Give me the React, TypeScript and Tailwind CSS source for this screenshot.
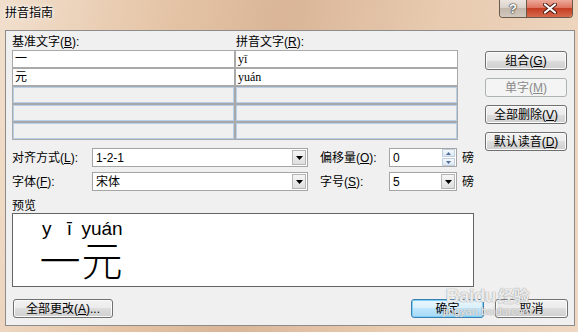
import React from "react";

const Key = ({ k }: { k: string }) => (
  <>
    (<span className="underline underline-offset-1">{k}</span>)
  </>
);

interface WinButtonProps {
  children: React.ReactNode;
  className?: string;
  disabled?: boolean;
  primary?: boolean;
}

const WinButton: React.FC<WinButtonProps> = ({
  children,
  className = "",
  disabled = false,
  primary = false,
}) => {
  const look = disabled
    ? "border-[#adb2b5] bg-[#f4f4f4] text-[#8a8a8a]"
    : primary
    ? "border-[#3c7fb1] bg-[linear-gradient(#eaf6fd,#d9f0fc_50%,#bee6fd_50%,#a7d9f5)] shadow-[inset_0_0_0_1px_#7fd0f7] text-black"
    : "border-[#707070] bg-[linear-gradient(#f2f2f2,#ebebeb_50%,#dddddd_50%,#cfcfcf)] shadow-[inset_0_0_0_1px_#fbfbfb] text-black";
  return (
    <div
      className={`flex h-[19px] items-center justify-center rounded-[3px] border text-[12px] leading-none ${look} ${className}`}
    >
      {children}
    </div>
  );
};

const DropArrow = () => (
  <svg width="7" height="4" viewBox="0 0 7 4">
    <path d="M0 0h7L3.5 4z" fill="#000" />
  </svg>
);

const ComboBox = ({ value, width }: { value: string; width: string }) => (
  <div className={`flex h-[19px] items-center border border-[#a5a5a5] bg-white ${width}`}>
    <span className="flex-1 pl-[3px] text-[12px] leading-none">{value}</span>
    <div className="mr-px flex h-[15px] w-[14px] items-center justify-center border border-[#b5b5b5] bg-[linear-gradient(#f6f6f6,#dedede)]">
      <DropArrow />
    </div>
  </div>
);

const SpinBox = ({ value }: { value: string }) => (
  <div className="flex h-[19px] w-[68px] items-center border border-[#a5a5a5] bg-white">
    <span className="flex-1 pl-[3px] text-[12px] leading-none">{value}</span>
    <div className="mr-px flex h-[17px] w-[13px] flex-col">
      <div className="flex h-[8px] items-center justify-center border border-[#c2cfdf] bg-[linear-gradient(#f4f8fc,#dce7f3)]">
        <svg width="5" height="3" viewBox="0 0 5 3">
          <path d="M0 3h5L2.5 0z" fill="#4d6d99" />
        </svg>
      </div>
      <div className="mt-px flex h-[8px] items-center justify-center border border-[#c2cfdf] bg-[linear-gradient(#f4f8fc,#dce7f3)]">
        <svg width="5" height="3" viewBox="0 0 5 3">
          <path d="M0 0h5L2.5 3z" fill="#4d6d99" />
        </svg>
      </div>
    </div>
  </div>
);

const rows = [
  { base: "一", ruby: "yī" },
  { base: "元", ruby: "yuán" },
  null,
  null,
  null,
];

export default function App() {
  return (
    <div className="relative flex h-[332px] w-[578px] flex-col overflow-hidden bg-[linear-gradient(100deg,#f1dfcd_0%,#e6c6a8_25%,#dab597_45%,#e8cbb0_70%,#efd8c3_100%)] pl-[5px] pr-[3px] pb-[6px] font-['Liberation_Sans','Noto_Sans_CJK_SC',sans-serif] text-black">
      {/* title bar */}
      <div className="flex h-[30px] shrink-0 items-start justify-between">
        <span className="pt-[6px] text-[12px] leading-[14px] [text-shadow:0_0_6px_#fff,0_0_3px_#fff]">
          拼音指南
        </span>
        <div className="mr-[2px] flex h-[18px] overflow-hidden rounded-b-[4px] border border-t-0 border-[#6a5a4c]">
          <div className="flex w-[27px] items-center justify-center border-r border-[#6a5a4c] bg-[linear-gradient(#ece6e0,#d9d0c8_50%,#c4b8ad_50%,#d2c8be)]">
            <span className="text-[13px] font-bold leading-none text-white [text-shadow:0_0_1px_#333,0_0_1px_#333,0_0_2px_#333]">
              ?
            </span>
          </div>
          <div className="flex w-[45px] items-center justify-center bg-[linear-gradient(#eeaa9a,#dc6e58_50%,#c53d22_50%,#d6694c)]">
            <svg width="14" height="11" viewBox="0 0 14 11">
              <path d="M2 1.5l10 8M12 1.5l-10 8" stroke="#4a2018" strokeWidth="4" strokeLinecap="round" />
              <path d="M2 1.5l10 8M12 1.5l-10 8" stroke="#fff" strokeWidth="2.2" strokeLinecap="round" />
            </svg>
          </div>
        </div>
      </div>

      {/* client area */}
      <div className="flex flex-1 flex-col border border-[#8c8c8c] bg-[#f0f0f0] pl-[6px] pr-[6px] pb-[7px] text-[12px]">
        <div className="flex">
          {/* left column */}
          <div className="flex w-[462px] flex-col pt-[3px]">
            <div className="grid h-[16px] w-[446px] grid-cols-2 leading-[16px]">
              <span>
                基准文字<Key k="B" />:
              </span>
              <span className="pl-[1px]">
                拼音文字<Key k="R" />:
              </span>
            </div>
            <div className="grid w-[446px] grid-cols-2 gap-[2px] bg-[#a9a9a9] p-px">
              {rows.map((r, i) =>
                r ? (
                  <React.Fragment key={i}>
                    <div className="h-[16px] bg-white pl-[2px] leading-[16px]">{r.base}</div>
                    <div className="h-[16px] bg-white pl-[2px] font-['Liberation_Serif',serif] text-[12px] leading-[16px]">
                      {r.ruby}
                    </div>
                  </React.Fragment>
                ) : (
                  <React.Fragment key={i}>
                    <div className="h-[16px] border border-[#b7cfe9] bg-[#f0f0f0]" />
                    <div className="h-[16px] border border-[#b7cfe9] bg-[#f0f0f0]" />
                  </React.Fragment>
                )
              )}
            </div>

            <div className="mt-[8px] flex items-center">
              <span className="w-[80px] leading-none">
                对齐方式<Key k="L" />:
              </span>
              <ComboBox value="1-2-1" width="w-[216px]" />
              <span className="ml-[12px] w-[69px] leading-none">
                偏移量<Key k="O" />:
              </span>
              <SpinBox value="0" />
              <span className="ml-[5px] leading-none">磅</span>
            </div>
            <div className="mt-[5px] flex items-center">
              <span className="w-[80px] leading-none">
                字体<Key k="F" />:
              </span>
              <ComboBox value="宋体" width="w-[216px]" />
              <span className="ml-[12px] w-[69px] leading-none">
                字号<Key k="S" />:
              </span>
              <ComboBox value="5" width="w-[68px]" />
              <span className="ml-[5px] leading-none">磅</span>
            </div>

            <div className="mt-[8px] h-[14px] leading-[14px]">预览</div>
            <div className="h-[74px] w-[462px] overflow-hidden border border-[#646464] bg-white pl-[26px] pt-[6px]">
              <div className="flex font-['Liberation_Sans',sans-serif] text-[19px] leading-[18px]">
                <div className="flex w-[42px] justify-between pl-[3px] pr-[9px]">
                  <span>y</span>
                  <span>ī</span>
                </div>
                <div className="w-[42px] text-center">yuán</div>
              </div>
              <div className="flex font-['Noto_Sans_CJK_SC',sans-serif] text-[41px] font-light leading-[40px]">
                <span className="w-[42px] text-center">一</span>
                <span className="w-[42px] text-center">元</span>
              </div>
            </div>
          </div>

          {/* right buttons */}
          <div className="ml-[11px] flex w-[82px] flex-col gap-[8px] pt-[20px]">
            <WinButton>
              组合<Key k="G" />
            </WinButton>
            <WinButton disabled>
              单字<Key k="M" />
            </WinButton>
            <WinButton>
              全部删除<Key k="V" />
            </WinButton>
            <WinButton>
              默认读音<Key k="D" />
            </WinButton>
          </div>
        </div>

        {/* bottom buttons */}
        <div className="mt-[12px] flex items-center justify-between">
          <WinButton className="ml-px w-[100px]">
            全部更改<Key k="A" />...
          </WinButton>
          <div className="flex gap-[11px]">
            <WinButton primary className="w-[73px]">
              确定
            </WinButton>
            <WinButton className="w-[73px]">取消</WinButton>
          </div>
        </div>
      </div>

      {/* watermark */}
      <div className="pointer-events-none absolute left-[443px] top-[286px] flex flex-col items-center leading-none text-white/80 [text-shadow:0_0_1px_#9a9a9a,0_0_1px_#9a9a9a]">
        <span className="text-[19px] font-bold tracking-[-0.5px]">
          Baidu<span className="ml-[2px] text-[16px]">经验</span>
        </span>
        <span className="mt-[1px] text-[11px]">jingyan.baidu.com</span>
      </div>
    </div>
  );
}
